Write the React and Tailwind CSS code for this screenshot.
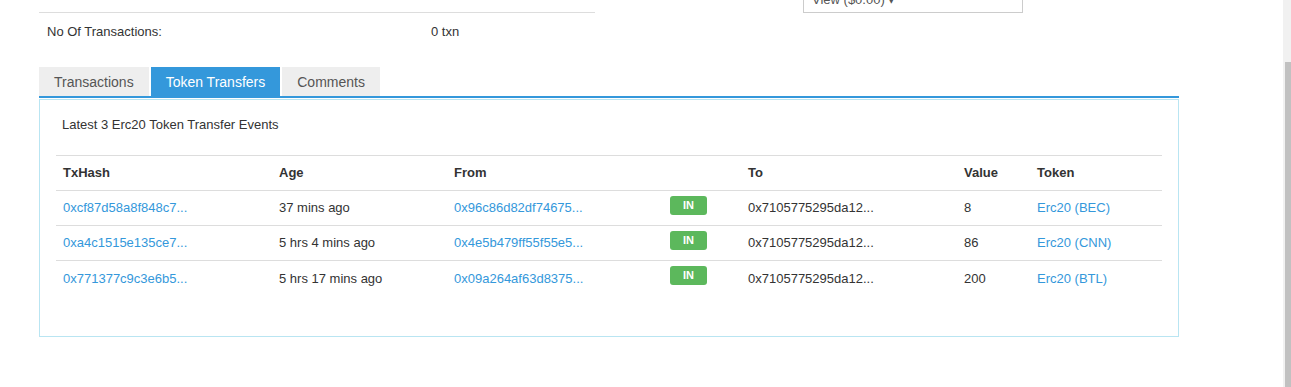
import React from 'react'

const rows = [
  {
    hash: '0xcf87d58a8f848c7...',
    age: '37 mins ago',
    from: '0x96c86d82df74675...',
    to: '0x7105775295da12...',
    value: '8',
    token: 'Erc20 (BEC)',
  },
  {
    hash: '0xa4c1515e135ce7...',
    age: '5 hrs 4 mins ago',
    from: '0x4e5b479ff55f55e5...',
    to: '0x7105775295da12...',
    value: '86',
    token: 'Erc20 (CNN)',
  },
  {
    hash: '0x771377c9c3e6b5...',
    age: '5 hrs 17 mins ago',
    from: '0x09a264af63d8375...',
    to: '0x7105775295da12...',
    value: '200',
    token: 'Erc20 (BTL)',
  },
]

const cols = 'grid grid-cols-[216px_175px_216px_78px_216px_73px_133px]'

const Tab = ({ label, active }) => (
  <div
    className={`h-[29px] px-[15px] pt-[1px] flex items-center text-[14px] ${
      active ? 'bg-[#3498db] text-white' : 'bg-[#eeeeee] text-[#555]'
    }`}
  >
    {label}
  </div>
)

export default function App() {
  return (
    <div className="flex h-[387px] overflow-hidden bg-white font-['Liberation_Sans',Arial,sans-serif] text-[13px] text-[#333]">
      <div className="flex-1 min-w-0">
        {/* summary block, scrolled partly out of view */}
        <div className="flex items-end h-[13px]">
          <div className="ml-[39px] w-[556px] h-full border-b border-[#ddd]" />
          <div className="ml-[208px] w-[220px] h-[26px] shrink-0 border border-[#ccc] bg-white px-[8px] flex items-center text-[#555]">
            View ($0.00) ▾
          </div>
        </div>
        <div className="flex items-center h-[37px] ml-[39px] w-[556px]">
          <div className="pl-[8px] w-[392px]">No Of Transactions:</div>
          <div>0 txn</div>
        </div>

        {/* tabs */}
        <div className="mt-[17px] ml-[39px] w-[1140px]">
          <div className="flex gap-[2px]">
            <Tab label="Transactions" />
            <Tab label="Token Transfers" active />
            <Tab label="Comments" />
          </div>
          <div className="h-[2px] bg-[#3498db]" />

          <div className="mt-[1px] h-[238px] border border-[#b9e5f2] px-[16px]">
            <div className="mt-[17px] pl-[6px] leading-[15px]">
              Latest 3 Erc20 Token Transfer Events
            </div>

            <div className="mt-[23px]">
              <div className={`${cols} h-[36px] items-center border-y border-[#ddd] font-bold`}>
                <div className="px-[7px]">TxHash</div>
                <div className="px-[7px]">Age</div>
                <div className="px-[7px]">From</div>
                <div />
                <div className="px-[7px]">To</div>
                <div className="px-[7px]">Value</div>
                <div className="px-[7px]">Token</div>
              </div>
              {rows.map((r, i) => (
                <div
                  key={r.hash}
                  className={`${cols} h-[35px] items-center ${
                    i < rows.length - 1 ? 'border-b border-[#ddd]' : ''
                  }`}
                >
                  <div className="px-[7px] text-[#3498db]">{r.hash}</div>
                  <div className="px-[7px]">{r.age}</div>
                  <div className="px-[7px] text-[#3498db]">{r.from}</div>
                  <div className="px-[7px]">
                    <span className="mb-[6px] w-[37px] h-[19px] rounded-[3px] bg-[#5cb85c] text-white text-[11px] font-bold flex items-center justify-center">
                      IN
                    </span>
                  </div>
                  <div className="px-[7px]">{r.to}</div>
                  <div className="px-[7px]">{r.value}</div>
                  <div className="px-[7px] text-[#3498db]">{r.token}</div>
                </div>
              ))}
            </div>
          </div>
        </div>
      </div>

      {/* browser scrollbar */}
      <div className="w-[8px] h-full bg-[#f1f1f1] flex flex-col">
        <div className="h-[62px]" />
        <div className="ml-[2px] flex-1 bg-[#c1c1c1]" />
      </div>
    </div>
  )
}
